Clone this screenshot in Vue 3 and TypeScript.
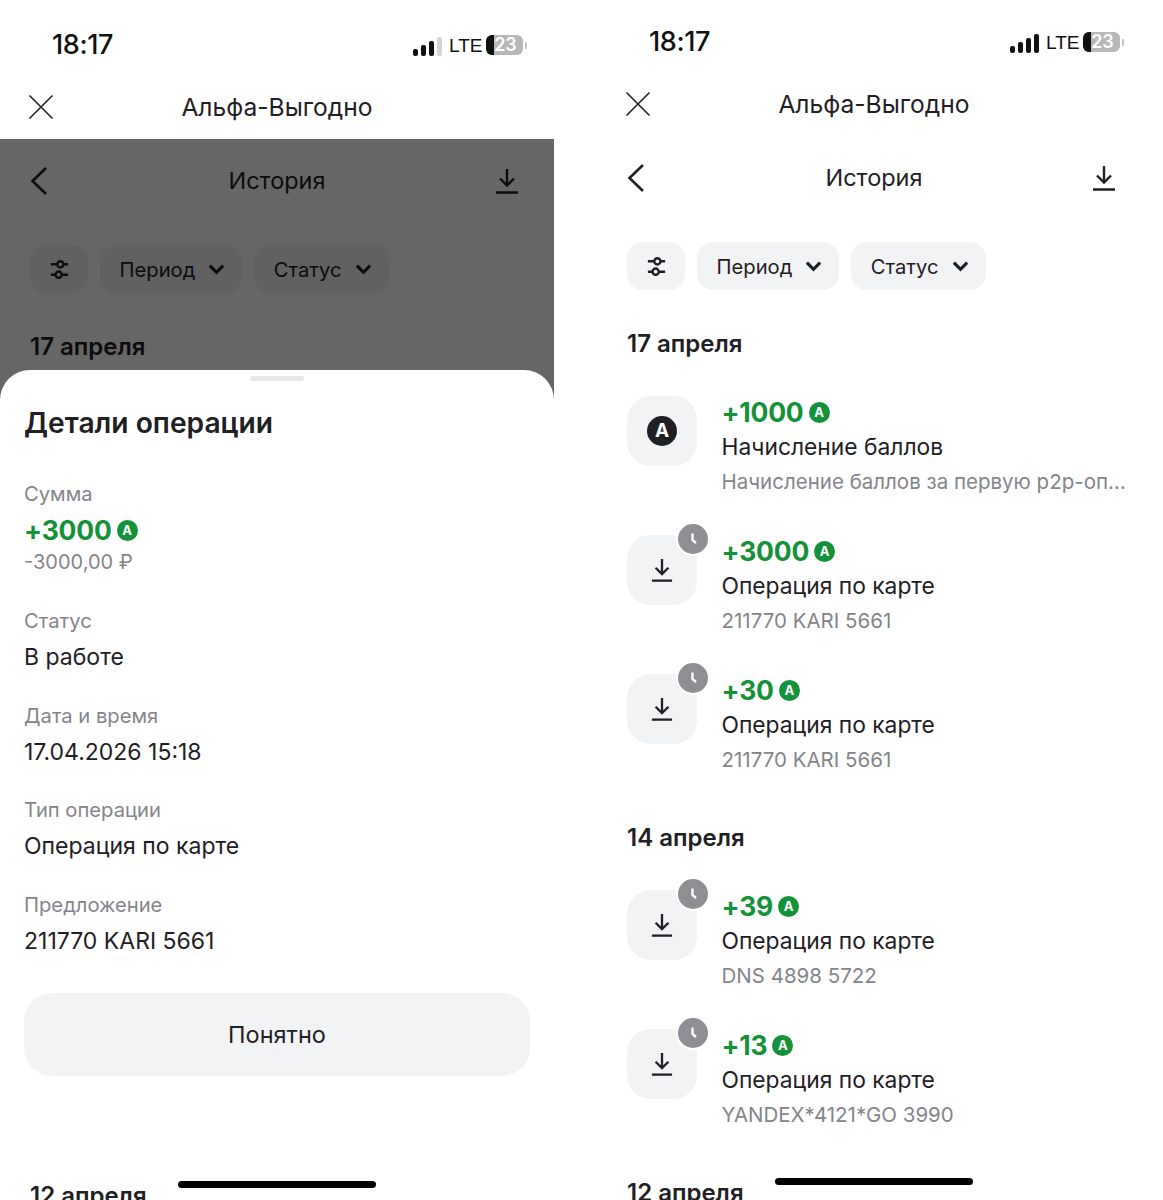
<script setup lang="ts">
interface Operation {
  amount: string
  title: string
  sub: string
  bonus?: boolean
}

interface Group {
  date: string
  items: Operation[]
}

const phones = [{ sheet: true }, { sheet: false }]

const groups: Group[] = [
  {
    date: '17 апреля',
    items: [
      { amount: '+1000', title: 'Начисление баллов', sub: 'Начисление баллов за первую р2р-операцию', bonus: true },
      { amount: '+3000', title: 'Операция по карте', sub: '211770 KARI 5661' },
      { amount: '+30', title: 'Операция по карте', sub: '211770 KARI 5661' },
    ],
  },
  {
    date: '14 апреля',
    items: [
      { amount: '+39', title: 'Операция по карте', sub: 'DNS 4898 5722' },
      { amount: '+13', title: 'Операция по карте', sub: 'YANDEX*4121*GO 3990' },
    ],
  },
  { date: '12 апреля', items: [] },
]

const details = [
  { label: 'Статус', value: 'В работе' },
  { label: 'Дата и время', value: '17.04.2026 15:18' },
  { label: 'Тип операции', value: 'Операция по карте' },
  { label: 'Предложение', value: '211770 KARI 5661' },
]

const barHeights = [7, 11, 15, 19]
</script>

<template>
  <div class="page">
    <section v-for="(phone, p) in phones" :key="p" class="phone" :class="{ shifted: phone.sheet }">
      <div class="status">
        <span class="time">18:17</span>
        <div class="status-right">
          <div class="signal">
            <i
              v-for="(h, i) in barHeights"
              :key="i"
              :class="{ off: phone.sheet && i === 3 }"
              :style="{ height: h + 'px' }"
            ></i>
          </div>
          <span class="lte">LTE</span>
          <div class="battery"><b></b><span>23</span></div>
          <i class="battery-tip"></i>
        </div>
      </div>

      <header class="app-bar">
        <svg class="close" width="26" height="26" viewBox="0 0 26 26" fill="none" stroke="#1f2024" stroke-width="1.6">
          <path d="M1.5 1.5 24.5 24.5M24.5 1.5 1.5 24.5" />
        </svg>
        <span>Альфа-Выгодно</span>
      </header>

      <div class="history">
        <div class="nav">
          <svg width="18" height="30" viewBox="0 0 18 30" fill="none" stroke="#1f2024" stroke-width="2.6">
            <path d="M16 2 2.5 15 16 28" />
          </svg>
          <span>История</span>
          <svg width="24" height="26" viewBox="0 0 24 26" fill="none" stroke="#1f2024" stroke-width="2.4">
            <path d="M12 1v16M5 10.5l7 7 7-7M1 24.5h22" />
          </svg>
        </div>

        <div class="chips">
          <div class="chip square">
            <svg width="19" height="21" viewBox="0 0 22 24" fill="none" stroke="#1f2024" stroke-width="2.8">
              <path d="M1 6h7M16 6h5M1 18h5M14 18h7" />
              <circle cx="12" cy="6" r="3.6" />
              <circle cx="10" cy="18" r="3.6" />
            </svg>
          </div>
          <div v-for="label in ['Период', 'Статус']" :key="label" class="chip">
            {{ label }}
            <svg width="17" height="12" viewBox="0 0 18 12" fill="none" stroke="#1f2024" stroke-width="3.4">
              <path d="M2 2.5 9 9.5 16 2.5" />
            </svg>
          </div>
        </div>

        <div v-for="group in groups" :key="group.date" class="group">
          <h3>{{ group.date }}</h3>
          <div v-for="(op, i) in group.items" :key="i" class="row">
            <div class="tile">
              <span v-if="op.bonus" class="tile-a">A</span>
              <svg v-else width="22" height="24" viewBox="0 0 24 26" fill="none" stroke="#1f2024" stroke-width="2.5">
                <path d="M12 1v16M5 10.5l7 7 7-7M1 24.5h22" />
              </svg>
              <span v-if="!op.bonus" class="clock">
                <svg width="14" height="14" viewBox="0 0 14 14" fill="none" stroke="#fff" stroke-width="2.4">
                  <path d="M6.5 1.5v6.5l3.5 3" />
                </svg>
              </span>
            </div>
            <div class="row-text">
              <div class="amount">{{ op.amount }}<span class="coin">A</span></div>
              <div class="row-title">{{ op.title }}</div>
              <div class="row-sub">{{ op.sub }}</div>
            </div>
          </div>
        </div>
      </div>

      <template v-if="phone.sheet">
        <div class="overlay"></div>
        <div class="sheet">
          <i class="handle"></i>
          <h2>Детали операции</h2>
          <div class="field first">
            <div class="label">Сумма</div>
            <div class="amount">+3000<span class="coin">A</span></div>
            <div class="rub">-3000,00 ₽</div>
          </div>
          <div v-for="d in details" :key="d.label" class="field">
            <div class="label">{{ d.label }}</div>
            <div class="value">{{ d.value }}</div>
          </div>
          <button class="ok" type="button">Понятно</button>
        </div>
      </template>

      <i class="home-bar"></i>
    </section>
  </div>
</template>

<style scoped>
.page {
  display: grid;
  grid-template-columns: 554px 554px;
  column-gap: 43px;
  height: 1200px;
  overflow: hidden;
  background: #fff;
  color: #1f2024;
  font-family: Inter, "Noto Sans", sans-serif;
}
.phone {
  position: relative;
  height: 1200px;
}
.shifted {
  margin-top: 3px;
}
.status {
  height: 78px;
  padding: 24px 27px 0 52px;
  box-sizing: border-box;
  display: flex;
  justify-content: space-between;
  align-items: flex-start;
}
.time {
  font-size: 27px;
  line-height: 36px;
  font-weight: 500;
  color: #111;
  letter-spacing: -0.4px;
}
.status-right {
  display: flex;
  align-items: center;
  height: 36px;
}
.signal {
  display: flex;
  align-items: flex-end;
  gap: 2.5px;
  margin-right: 7px;
  margin-top: 2px;
}
.signal i {
  width: 5.5px;
  background: #111;
  border-radius: 2px;
}
.signal i.off {
  background: #d4d4d4;
}
.lte {
  font-size: 19px;
  font-family: "Liberation Sans", sans-serif;
  color: #111;
  width: 37px;
  margin-top: 1px;
}
.battery {
  position: relative;
  width: 37px;
  height: 20px;
  border-radius: 6px;
  background: #b8b8b8;
  overflow: hidden;
  text-align: center;
  color: #fff;
  font-size: 18px;
  line-height: 20px;
  font-weight: 600;
}
.battery b {
  position: absolute;
  left: 0;
  top: 0;
  bottom: 0;
  width: 8px;
  background: #111;
}
.battery span {
  position: relative;
  padding-left: 2px;
}
.battery-tip {
  width: 2px;
  height: 7px;
  margin: 0 0 0 2px;
  border-radius: 2px;
  background: #c4c4c4;
}
.app-bar {
  position: relative;
  height: 58px;
  text-align: center;
  font-size: 24.6px;
  line-height: 52px;
}
.close {
  position: absolute;
  left: 28px;
  top: 13px;
}
.nav {
  height: 78px;
  padding: 5px 30px 0;
  box-sizing: border-box;
  display: grid;
  grid-template-columns: 1fr auto 1fr;
  align-items: center;
  font-size: 23.5px;
}
.nav svg:last-child {
  justify-self: end;
  margin-right: 5px;
}
.chips {
  display: flex;
  gap: 12px;
  padding: 28px 0 0 30px;
}
.chip {
  height: 48px;
  padding: 0 17px 0 19.5px;
  display: flex;
  align-items: center;
  gap: 13px;
  border-radius: 16px;
  background: #f2f3f5;
  font-size: 20.2px;
}
.chip.square {
  width: 58px;
  padding: 0;
  justify-content: center;
}
.group {
  padding-left: 30px;
  padding-right: 24px;
  margin-top: 39px;
}
.group + .group {
  margin-top: 47px;
}
.group h3 {
  margin: 0 0 37px;
  font-size: 24px;
  line-height: 30px;
  font-weight: 600;
}
.row {
  display: flex;
  gap: 24.5px;
  margin-bottom: 37px;
}
.row:last-child {
  margin-bottom: 0;
}
.tile {
  position: relative;
  flex: none;
  width: 70px;
  height: 70px;
  border-radius: 24px;
  background: #f2f3f5;
  display: flex;
  align-items: center;
  justify-content: center;
}
.tile-a {
  width: 30px;
  height: 30px;
  border-radius: 50%;
  background: #1f2024;
  color: #fff;
  text-align: center;
  font-size: 19px;
  line-height: 30px;
  font-weight: 700;
}
.clock {
  position: absolute;
  top: -13px;
  right: -13px;
  width: 30px;
  height: 30px;
  border: 2px solid #fff;
  border-radius: 50%;
  background: #8e8e93;
  display: flex;
  align-items: center;
  justify-content: center;
}
.row-text {
  min-width: 0;
  flex: 1;
}
.amount {
  display: flex;
  align-items: center;
  gap: 5px;
  height: 32px;
  font-size: 26.5px;
  font-weight: 700;
  letter-spacing: -0.2px;
  color: #149239;
}
.coin {
  width: 21px;
  height: 21px;
  border-radius: 50%;
  background: #149239;
  color: #fff;
  text-align: center;
  font-size: 13px;
  line-height: 21px;
  font-weight: 700;
  letter-spacing: 0;
}
.row-title {
  font-size: 22.8px;
  line-height: 38px;
}
.row-sub {
  font-size: 20.5px;
  line-height: 32px;
  color: #84858a;
  white-space: nowrap;
  overflow: hidden;
  text-overflow: ellipsis;
}
.overlay {
  position: absolute;
  left: 0;
  right: 0;
  top: 136px;
  height: 300px;
  background: rgba(0, 0, 0, 0.6);
}
.sheet {
  position: absolute;
  left: 0;
  right: 0;
  top: 367px;
  height: 805px;
  padding: 0 24px;
  box-sizing: border-box;
  background: #fff;
  border-radius: 30px 30px 0 0;
}
.handle {
  display: block;
  width: 54px;
  height: 5px;
  margin: 6px auto 0;
  border-radius: 3px;
  background: #e6e7ea;
}
.sheet h2 {
  margin: 22px 0 0;
  font-size: 28.2px;
  line-height: 40px;
  font-weight: 600;
}
.field {
  margin-top: 22.6px;
}
.field.first {
  margin-top: 36px;
  margin-bottom: 32px;
}
.label {
  font-size: 20.2px;
  line-height: 30px;
  color: #84858a;
}
.field .amount {
  height: 40px;
  margin-top: 1px;
}
.rub {
  font-size: 20px;
  line-height: 24px;
  color: #84858a;
}
.value {
  font-size: 23px;
  line-height: 42px;
}
.ok {
  display: block;
  width: 506px;
  height: 83px;
  margin-top: 31px;
  border: none;
  border-radius: 28px;
  background: #f2f3f5;
  color: #1f2024;
  font: inherit;
  font-size: 23.5px;
}
.home-bar {
  position: absolute;
  left: 178px;
  top: 1178px;
  width: 198px;
  height: 7px;
  border-radius: 4px;
  background: #000;
}
</style>

<style>
html,
body {
  margin: 0;
  background: #fff;
}
</style>
